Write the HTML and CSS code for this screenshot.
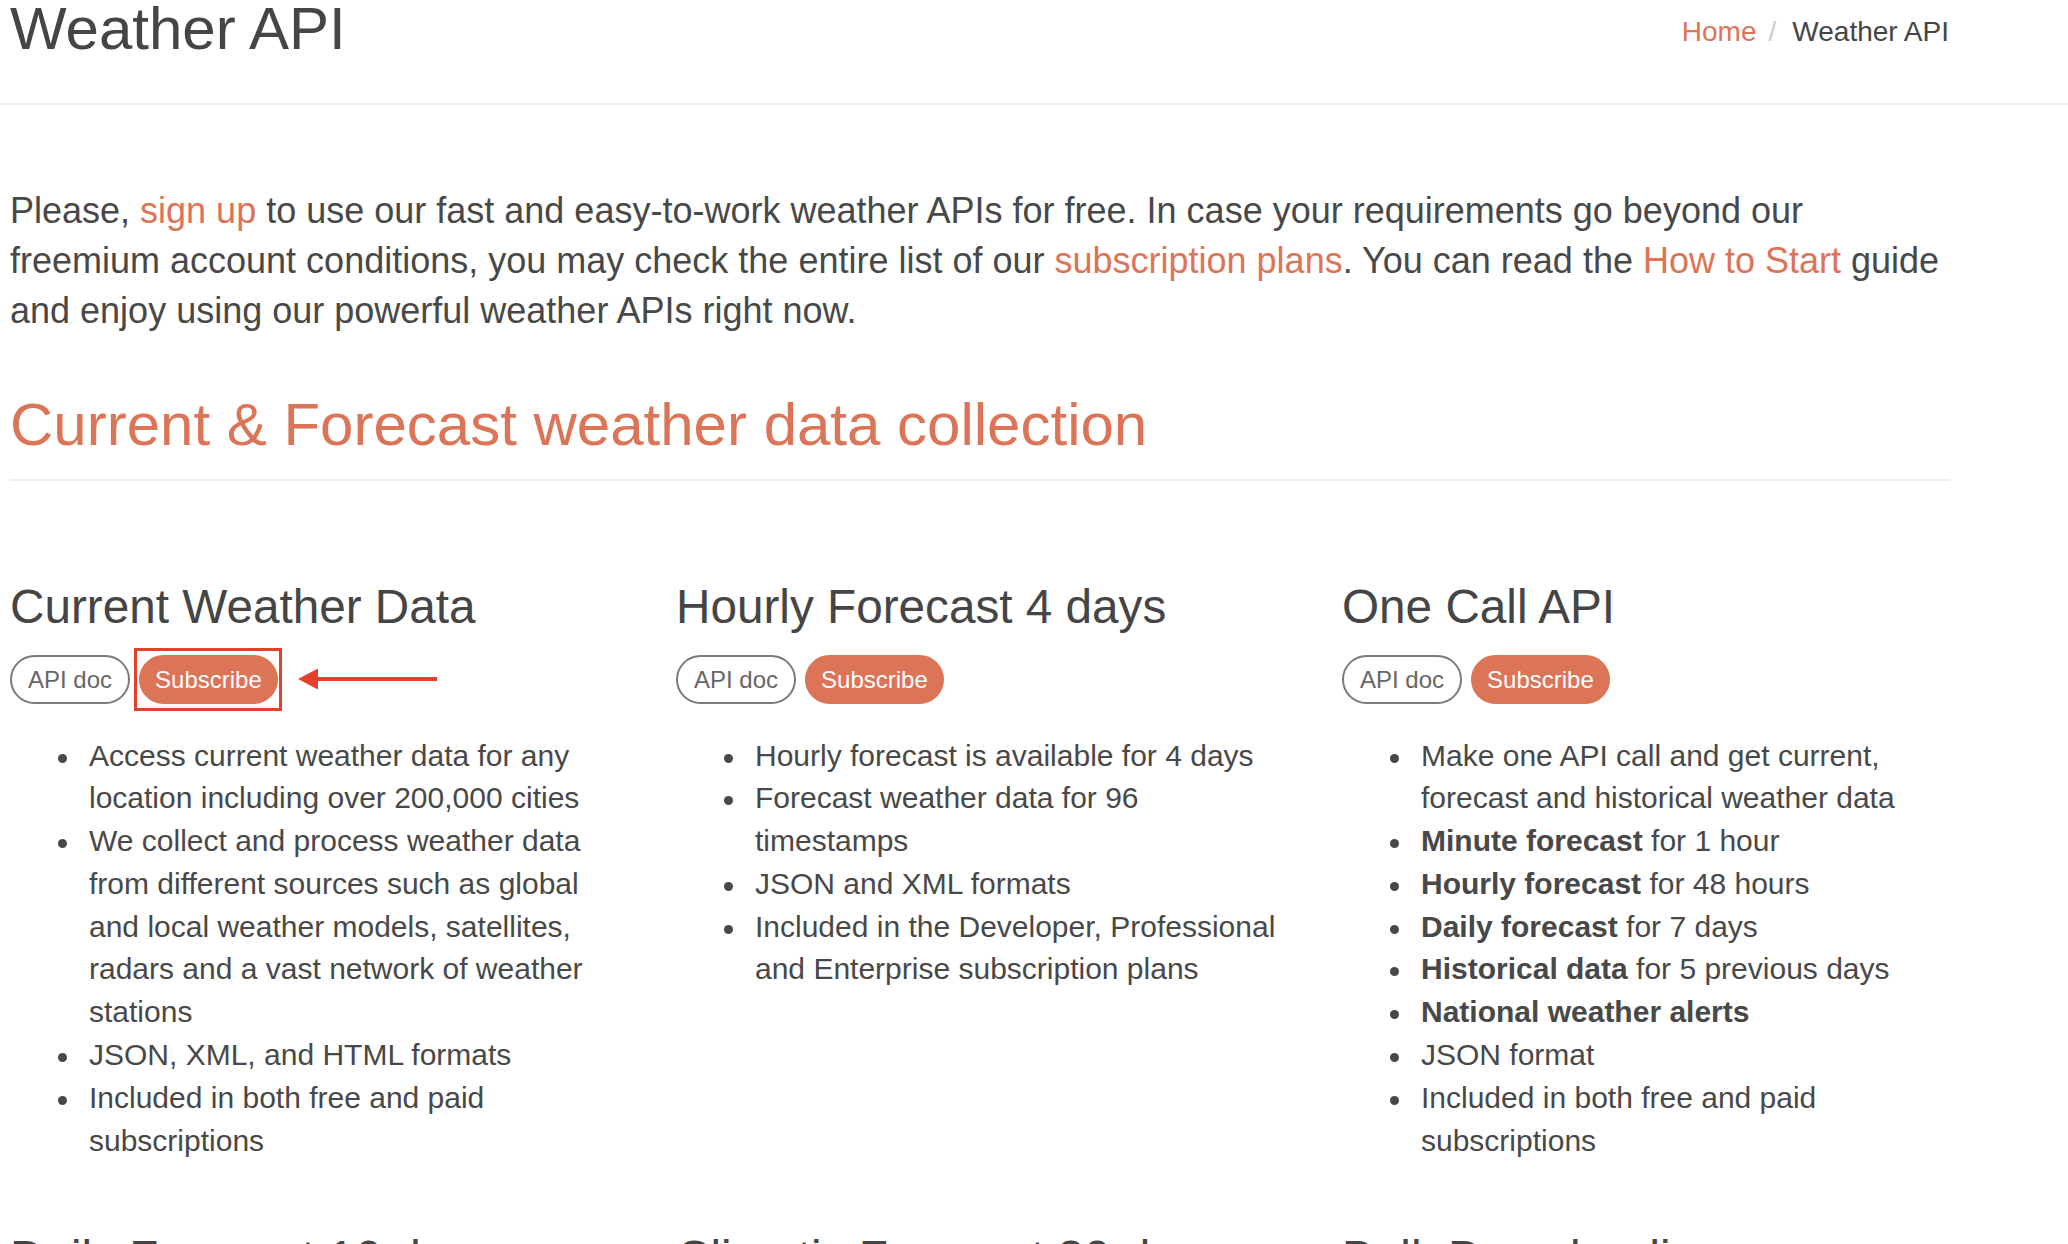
FILE: index.html
```html
<!DOCTYPE html>
<html lang="en">
<head>
<meta charset="utf-8">
<title>Weather API</title>
<link rel="stylesheet" href="styles.css">
</head>
<body>
<header class="page-header">
  <div class="container header-inner">
    <h1 class="page-title">Weather API</h1>
    <ol class="breadcrumb">
      <li><a href="#" class="link">Home</a></li>
      <li class="crumb-sep">/</li>
      <li class="crumb-active">Weather API</li>
    </ol>
  </div>
</header>

<main class="container">
  <p class="intro">Please, <a href="#" class="link">sign up</a> to use our fast and easy-to-work weather APIs for free. In case your requirements go beyond our freemium account conditions, you may check the entire list of our <a href="#" class="link">subscription plans</a>. You can read the <a href="#" class="link">How to Start</a> guide and enjoy using our powerful weather APIs right now.</p>

  <h2 class="section-title">Current &amp; Forecast weather data collection</h2>

  <div class="api-grid">
    <section class="api-card">
      <h3 class="api-title">Current Weather Data</h3>
      <div class="btn-row">
        <a href="#" class="btn btn-outline">API doc</a>
        <span class="highlight">
          <a href="#" class="btn btn-fill">Subscribe</a>
          <svg class="arrow" width="140" height="22" viewBox="0 0 140 22" aria-hidden="true">
            <polygon points="0,11 20,0.5 20,21.5" fill="#e63f2b"/>
            <rect x="18" y="9" width="121" height="4" fill="#e63f2b"/>
          </svg>
        </span>
      </div>
      <ul class="features">
        <li>Access current weather data for any location including over 200,000 cities</li>
        <li>We collect and process weather data from different sources such as global and local weather models, satellites, radars and a vast network of weather stations</li>
        <li>JSON, XML, and HTML formats</li>
        <li>Included in both free and paid subscriptions</li>
      </ul>
    </section>

    <section class="api-card">
      <h3 class="api-title">Hourly Forecast 4 days</h3>
      <div class="btn-row">
        <a href="#" class="btn btn-outline">API doc</a>
        <a href="#" class="btn btn-fill">Subscribe</a>
      </div>
      <ul class="features">
        <li>Hourly forecast is available for 4 days</li>
        <li>Forecast weather data for 96 timestamps</li>
        <li>JSON and XML formats</li>
        <li>Included in the Developer, Professional and Enterprise subscription plans</li>
      </ul>
    </section>

    <section class="api-card">
      <h3 class="api-title">One Call API</h3>
      <div class="btn-row">
        <a href="#" class="btn btn-outline">API doc</a>
        <a href="#" class="btn btn-fill">Subscribe</a>
      </div>
      <ul class="features">
        <li>Make one API call and get current, forecast and historical weather data</li>
        <li><b>Minute forecast</b> for 1 hour</li>
        <li><b>Hourly forecast</b> for 48 hours</li>
        <li><b>Daily forecast</b> for 7 days</li>
        <li><b>Historical data</b> for 5 previous days</li>
        <li><b>National weather alerts</b></li>
        <li>JSON format</li>
        <li>Included in both free and paid subscriptions</li>
      </ul>
    </section>

    <section class="api-card">
      <h3 class="api-title">Daily Forecast 16 days</h3>
      <div class="btn-row">
        <a href="#" class="btn btn-outline">API doc</a>
        <a href="#" class="btn btn-fill">Subscribe</a>
      </div>
      <ul class="features">
        <li>Daily forecast is available for 16 days</li>
        <li>Forecast weather data with 1-day step</li>
        <li>JSON and XML formats</li>
      </ul>
    </section>

    <section class="api-card">
      <h3 class="api-title">Climatic Forecast 30 days</h3>
      <div class="btn-row">
        <a href="#" class="btn btn-outline">API doc</a>
        <a href="#" class="btn btn-fill">Subscribe</a>
      </div>
      <ul class="features">
        <li>Forecast weather data for 30 days</li>
        <li>JSON and XML formats</li>
      </ul>
    </section>

    <section class="api-card">
      <h3 class="api-title">Bulk Downloading</h3>
      <div class="btn-row">
        <a href="#" class="btn btn-outline">API doc</a>
        <a href="#" class="btn btn-fill">Subscribe</a>
      </div>
      <ul class="features">
        <li>Current weather and forecasts for a large number of cities</li>
        <li>JSON format</li>
      </ul>
    </section>
  </div>
</main>
</body>
</html>
```

FILE: styles.css
```css
html {
  overflow: hidden;
}

body {
  margin: 0;
  background: #ffffff;
  color: #484848;
  font-family: "Liberation Sans", Arial, Helvetica, sans-serif;
}

.container {
  width: 1940px;
  margin-left: 10px;
}

.link {
  color: #dc7457;
  text-decoration: none;
}

/* ---------- header ---------- */
.page-header {
  border-bottom: 2px solid #eeeeee;
}

.header-inner {
  display: flex;
  justify-content: space-between;
  align-items: flex-start;
  height: 103px;
}

.page-title {
  margin: 0;
  font-size: 60px;
  line-height: 58px;
  font-weight: normal;
  color: #454545;
}

.breadcrumb {
  display: flex;
  list-style: none;
  margin: 0;
  padding: 13px 1px 0 0;
  font-size: 28px;
  line-height: 38px;
}

.crumb-sep {
  color: #cccccc;
  padding: 0 16px 0 12px;
}

.crumb-active {
  color: #454545;
}

/* ---------- intro ---------- */
.intro {
  margin: 81px 0 0;
  font-size: 36px;
  line-height: 50px;
}

.section-title {
  margin: 56px 0 0;
  padding-bottom: 21px;
  border-bottom: 2px solid #eeeeee;
  font-size: 60px;
  line-height: 66px;
  font-weight: normal;
  color: #dc7457;
}

/* ---------- api cards ---------- */
.api-grid {
  display: grid;
  grid-template-columns: repeat(3, 611px);
  column-gap: 55px;
  row-gap: 70px;
  margin-top: 100px;
}

.api-title {
  margin: 0;
  font-size: 47.7px;
  line-height: 52.5px;
  font-weight: normal;
  color: #454545;
}

.btn-row {
  display: flex;
  align-items: center;
  gap: 9px;
  margin-top: 21px;
}

.btn {
  display: inline-block;
  font-size: 24px;
  line-height: 33px;
  padding: 6px 16px;
  border: 2px solid;
  border-radius: 26px;
  text-decoration: none;
  white-space: nowrap;
}

.btn-outline {
  color: #666666;
  border-color: #7b7b7b;
  background: #ffffff;
}

.btn-fill {
  padding-left: 14px;
  padding-right: 14px;
  color: #ffffff;
  border-color: #dc7457;
  background: #dc7457;
}

.highlight {
  position: relative;
  display: inline-flex;
  padding: 4px 1px 4px 2px;
  margin: -7px -4px -7px -5px;
  border: 3px solid #e63f2b;
}

.arrow {
  position: absolute;
  left: calc(100% + 19px);
  top: 50%;
  transform: translateY(-50%);
}

.features {
  list-style: none;
  margin: 31px 0 0;
  padding: 0 0 0 79px;
  font-size: 30px;
  line-height: 42.8px;
}

.features li {
  position: relative;
}

.features li::before {
  content: "";
  position: absolute;
  left: -31px;
  top: 19px;
  width: 9px;
  height: 9px;
  border-radius: 50%;
  background: #484848;
}

.features b {
  font-weight: bold;
}
```
